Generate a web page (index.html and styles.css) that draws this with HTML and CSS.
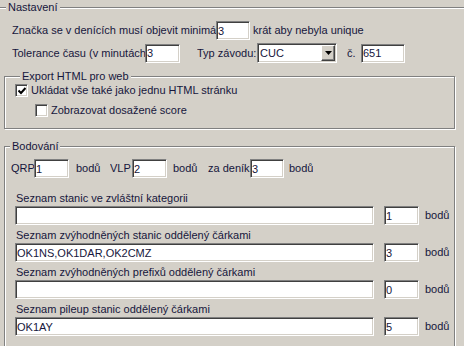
FILE: index.html
```html
<!DOCTYPE html>
<html lang="cs">

<head>
    <meta charset="UTF-8" />
    <title>Nastavení</title>
    <link rel="stylesheet" href="styles.css">
</head>

<body>

    <div class="group group-main">
        <div class="group-title">Nastavení</div>

        <div class="row row-first">
            <span class="lbl lbl-minimum">Značka se v denících musí objevit minimálně</span>
            <input class="edit edit-short" type="text" value="3" />
            <span class="after">krát aby nebyla unique</span>
        </div>

        <div class="row row-second">
            <span class="lbl lbl-tolerance">Tolerance času (v minutách)</span>
            <input class="edit edit-tol" type="text" value="3" />
            <span class="lbl lbl-type">Typ závodu:</span>
            <div class="combo">
                <span class="combo-text">CUC</span>
                <span class="combo-btn">
                    <svg width="7" height="4" viewBox="0 0 7 4"><polygon points="0,0 7,0 3.5,4" fill="#000" /></svg>
                </span>
            </div>
            <span class="lbl lbl-no">č.</span>
            <input class="edit edit-no" type="text" value="651" />
        </div>

        <!-- Export -->
        <div class="group group-export">
            <div class="group-title">Export HTML pro web</div>
            <label class="check">
                <span class="box">
                    <svg width="8" height="8" viewBox="0 0 8 8"><path d="M0.5 3.5 L3 6 L7.5 1" fill="none" stroke="#000" stroke-width="2" /></svg>
                </span>
                Ukládat vše také jako jednu HTML stránku
            </label>
            <label class="check check-sub">
                <span class="box"></span>
                Zobrazovat dosažené score
            </label>
        </div>

        <!-- Bodovani -->
        <div class="group group-points">
            <div class="group-title">Bodování</div>

            <div class="row-points">
                <span class="lbl lbl-qrp">QRP</span>
                <input class="edit edit-pt" type="text" value="1" />
                <span class="lbl unit unit-qrp">bodů</span>
                <span class="lbl lbl-vlp">VLP</span>
                <input class="edit edit-pt" type="text" value="2" />
                <span class="lbl unit unit-vlp">bodů</span>
                <span class="lbl lbl-log">za deník</span>
                <input class="edit edit-pt edit-log" type="text" value="3" />
                <span class="lbl unit unit-log">bodů</span>
            </div>

            <div class="list">
                <div class="list-label">Seznam stanic ve zvláštní kategorii</div>
                <div class="list-row">
                    <input class="edit edit-list" type="text" value="" />
                    <input class="edit edit-score" type="text" value="1" />
                    <span class="unit unit-list">bodů</span>
                </div>

                <div class="list-label">Seznam zvýhodněných stanic oddělený čárkami</div>
                <div class="list-row">
                    <input class="edit edit-list" type="text" value="OK1NS,OK1DAR,OK2CMZ" />
                    <input class="edit edit-score" type="text" value="3" />
                    <span class="unit unit-list">bodů</span>
                </div>

                <div class="list-label">Seznam zvýhodněných prefixů oddělený čárkami</div>
                <div class="list-row">
                    <input class="edit edit-list" type="text" value="" />
                    <input class="edit edit-score" type="text" value="0" />
                    <span class="unit unit-list">bodů</span>
                </div>

                <div class="list-label">Seznam pileup stanic oddělený čárkami</div>
                <div class="list-row">
                    <input class="edit edit-list" type="text" value="OK1AY" />
                    <input class="edit edit-score" type="text" value="5" />
                    <span class="unit unit-list">bodů</span>
                </div>
            </div>
        </div>
    </div>

</body>

</html>
```

FILE: styles.css
```css
body {
    margin: 0;
    background-color: #d4d0c8;
    font-family: "Liberation Sans", Arial, sans-serif;
    font-size: 11px;
    line-height: 13px;
    color: #16163c;
    overflow: hidden;
}

/* Etched group boxes */
.group {
    box-sizing: border-box;
    border: 1px solid #808080;
    box-shadow: inset 1px 1px 0 #fff, 1px 1px 0 #fff;
}

.group-title {
    display: table;
    margin: -7px 0 0 5px;
    padding: 0 2px;
    background-color: #d4d0c8;
}

.group-main {
    width: 480px;
    height: 420px;
    margin: 7px 0 0 -6px;
}

.group-main > .group-title {
    margin-left: 11px;
}

.group-export {
    width: 451px;
    margin: 13px 0 0 9px;
    padding: 0 0 11px 10px;
}

.group-points {
    width: 451px;
    height: 260px;
    margin: 17px 0 0 9px;
}

/* Rows */
.row {
    display: flex;
    align-items: center;
    height: 20px;
    padding-left: 17px;
}

.row-first {
    height: 19px;
    margin-top: 7px;
}

.row-second {
    margin-top: 3px;
}

.lbl {
    white-space: nowrap;
    overflow: hidden;
    flex-shrink: 0;
}

.lbl-minimum {
    width: 204px;
}

.lbl-tolerance {
    width: 133px;
}

.lbl-type {
    width: 60px;
    margin-left: 17px;
}

.lbl-no {
    width: 14px;
    margin-left: 10px;
}

.after {
    margin-left: 3px;
}

/* Edits */
.edit {
    box-sizing: border-box;
    height: 19px;
    margin: 0;
    padding: 0 1px;
    border: 1px solid;
    border-color: #808080 #fff #fff #808080;
    box-shadow: inset 1px 1px 0 #404040, inset -1px -1px 0 #d4d0c8;
    background-color: #fff;
    font: inherit;
    color: inherit;
    outline: none;
    flex-shrink: 0;
}

.edit-short {
    width: 34px;
}

.edit-tol {
    width: 35px;
}

.edit-no {
    width: 44px;
}

/* Combo box */
.combo {
    box-sizing: border-box;
    display: flex;
    align-items: center;
    width: 80px;
    height: 20px;
    padding: 1px;
    border: 1px solid;
    border-color: #808080 #fff #fff #808080;
    box-shadow: inset 1px 1px 0 #404040, inset -1px -1px 0 #d4d0c8;
    background-color: #fff;
    flex-shrink: 0;
}

.combo-text {
    flex: 1;
    padding-left: 1px;
}

.combo-btn {
    box-sizing: border-box;
    display: flex;
    align-items: center;
    justify-content: center;
    width: 14px;
    height: 16px;
    border: 1px solid;
    border-color: #fff #404040 #404040 #fff;
    box-shadow: inset -1px -1px 0 #808080;
    background-color: #d4d0c8;
}

/* Check boxes */
.check {
    display: flex;
    align-items: center;
    height: 13px;
    margin-top: 1px;
}

.check-sub {
    margin-top: 7px;
    padding-left: 20px;
}

.box {
    box-sizing: border-box;
    display: flex;
    align-items: center;
    justify-content: center;
    width: 13px;
    height: 13px;
    margin-right: 3px;
    border: 1px solid;
    border-color: #808080 #fff #fff #808080;
    box-shadow: inset 1px 1px 0 #404040, inset -1px -1px 0 #d4d0c8;
    background-color: #fff;
}

/* Points */
.row-points {
    display: flex;
    align-items: center;
    height: 19px;
    margin-top: 6px;
    padding-left: 6px;
}

.lbl-qrp {
    width: 23px;
}

.lbl-vlp {
    width: 22px;
}

.lbl-log {
    width: 42px;
}

.edit-pt {
    width: 35px;
}

.edit-log {
    width: 34px;
}

.unit-qrp {
    width: 34px;
    margin-left: 7px;
}

.unit-vlp {
    width: 35px;
    margin-left: 6px;
}

.unit-log {
    margin-left: 5px;
}

.list {
    padding-left: 10px;
}

.list-label {
    margin: 4px 0 1px 1px;
}

.list-label:first-child {
    margin-top: 14px;
}

.list-row {
    display: flex;
    align-items: center;
    height: 19px;
}

.edit-list {
    width: 359px;
}

.edit-score {
    width: 35px;
    margin-left: 10px;
}

.unit-list {
    margin-left: 6px;
}
```
